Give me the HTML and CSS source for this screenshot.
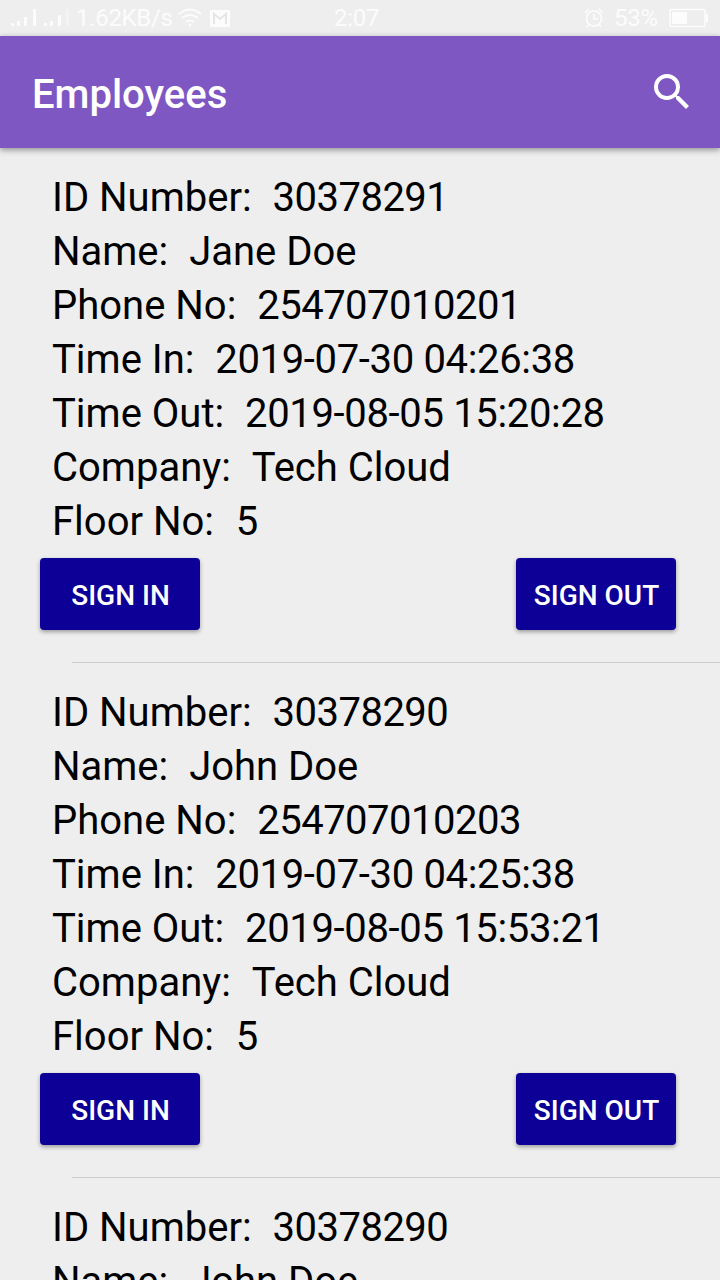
FILE: index.html
```html
<!DOCTYPE html>
<html lang="en">
<head>
<meta charset="utf-8">
<title>Employees</title>
<link rel="stylesheet" href="styles.css">
</head>
<body>
<div class="screen">
  <div class="status">
    <svg class="signals" width="62" height="20" viewBox="0 0 62 20" fill="#fff"><path d="M1 15h3v3H1zM7 13h3v5H7zM14 9h3v9h-3zM23 1h3v17h-3zM34 15h3v3h-3zM40 13h3v5h-3zM48 7h3v11h-3z"/><path d="M56 1h3v17h-3z" opacity=".35"/></svg>
    <span class="speed">1.62KB/s</span>
    <svg class="wifi" width="24" height="20" viewBox="0 0 24 20" fill="none" stroke="#fff" stroke-width="2"><path d="M1 6Q12-3 23 6M4 10Q12 4 20 10M8 14Q12 11 16 14"/><circle cx="12" cy="17" r="1.5" fill="#fff" stroke="none"/></svg>
    <svg class="mail" width="20" height="17" viewBox="0 0 20 17"><rect width="20" height="17" rx="1" fill="#fff"/><path d="M4 14V4l6 5 6-5v10" fill="none" stroke="#e4e4e4" stroke-width="2"/></svg>
    <span class="clock">2:07</span>
    <svg class="alarm" width="20" height="20" viewBox="0 0 20 20" fill="none" stroke="#fff" stroke-width="1.7"><circle cx="10" cy="10.5" r="7.5"/><path d="M1 5l4-4M19 5l-4-4M10 6v5h4M5 16l-2 3M15 16l2 3"/></svg>
    <span class="percent">53%</span>
    <svg class="battery" width="40" height="20" viewBox="0 0 40 20"><rect x="1" y="1.5" width="35" height="17" rx="1" fill="none" stroke="#fff" stroke-width="1.6"/><path d="M3 4h15v12H3zM37 6h2v8h-2z" fill="#fff"/></svg>
  </div>
  <header class="bar">
    <h1 class="title">Employees</h1>
    <svg class="search" width="48" height="48" viewBox="0 0 24 24" fill="#fff"><path d="M15.5 14h-.79l-.28-.27A6.471 6.471 0 0 0 16 9.5 6.5 6.5 0 1 0 9.5 16c1.61 0 3.09-.59 4.23-1.57l.27.28v.79l5 4.99L20.49 19l-4.99-5zm-6 0C7.01 14 5 11.99 5 9.5S7.01 5 9.5 5 14 7.01 14 9.5 11.99 14 9.5 14z"/></svg>
  </header>
  <main class="list">
    <section class="item">
      <div class="fields">
        <p>ID Number:  <span class="num">30378291</span></p>
        <p>Name:  <span class="text">Jane Doe</span></p>
        <p>Phone No:  <span class="num">254707010201</span></p>
        <p>Time In:  <span class="time">2019-07-30 04:26:38</span></p>
        <p>Time Out:  <span class="time">2019-08-05 15:20:28</span></p>
        <p>Company:  <span class="text">Tech Cloud</span></p>
        <p>Floor No:  <span class="floor">5</span></p>
      </div>
      <div class="actions"><button class="btn">SIGN IN</button><button class="btn">SIGN OUT</button></div>
    </section>
    <section class="item">
      <div class="fields">
        <p>ID Number:  <span class="num">30378290</span></p>
        <p>Name:  <span class="text">John Doe</span></p>
        <p>Phone No:  <span class="num">254707010203</span></p>
        <p>Time In:  <span class="time">2019-07-30 04:25:38</span></p>
        <p>Time Out:  <span class="time">2019-08-05 15:53:21</span></p>
        <p>Company:  <span class="text">Tech Cloud</span></p>
        <p>Floor No:  <span class="floor">5</span></p>
      </div>
      <div class="actions"><button class="btn">SIGN IN</button><button class="btn">SIGN OUT</button></div>
    </section>
    <section class="item">
      <div class="fields">
        <p>ID Number:  <span class="num">30378290</span></p>
        <p>Name:  <span class="text">John Doe</span></p>
      </div>
    </section>
  </main>
</div>
</body>
</html>
```
FILE: styles.css
```css
* { box-sizing: border-box; margin: 0; }
body { font-family: Roboto, "Liberation Sans", sans-serif; background: #eee; overflow: hidden; }
.screen { display: flex; flex-direction: column; width: 720px; height: 1280px; overflow: hidden; }
.status { display: flex; align-items: center; flex: none; height: 36px; padding: 0 11px 0 10px; color: rgba(255, 255, 255, .85); font-size: 24px; line-height: 36px; white-space: nowrap; }
.status svg { flex: none; opacity: .85; }
.speed { width: 96px; margin-left: 4px; letter-spacing: -.3px; }
.wifi { margin-left: 6px; }
.mail { margin-left: 8px; }
.clock { width: 48px; margin-left: 104px; letter-spacing: -.3px; }
.alarm { margin-left: auto; }
.percent { width: 44px; margin-left: 10px; letter-spacing: -.3px; }
.battery { margin-left: 11px; }
.bar { display: flex; flex: none; justify-content: space-between; align-items: flex-start; height: 112px; padding: 32px 24px 0 32px; background: #7e57c2; box-shadow: 0 2px 6px rgba(0, 0, 0, .4); z-index: 1; }
.title { color: #fff; font-size: 40px; font-weight: 500; line-height: 54px; }
.list { flex: 1; min-height: 0; overflow: hidden; }
.item { position: relative; height: 515px; padding: 23px 44px 0 40px; }
.item::after { content: ""; position: absolute; left: 72px; right: 0; bottom: 0; height: 1px; background: #cbcbcb; }
.fields { padding-left: 12px; color: #000; font-size: 40px; line-height: 54px; }
.fields p { white-space: pre; }
.num, .text, .time { margin-left: 1px; }
.num { letter-spacing: -.5px; }
.time { letter-spacing: -.34px; }
.floor { margin-left: 2px; }
.actions { display: flex; justify-content: space-between; margin-top: 9px; }
.btn { width: 160px; height: 72px; padding: 4px 0 0 1px; border: 0; border-radius: 4px; background: #0d0096; color: #fff; font: 500 28px/34px Roboto, "Liberation Sans", sans-serif; box-shadow: 0 2px 4px rgba(0, 0, 0, .35); white-space: nowrap; }
```
